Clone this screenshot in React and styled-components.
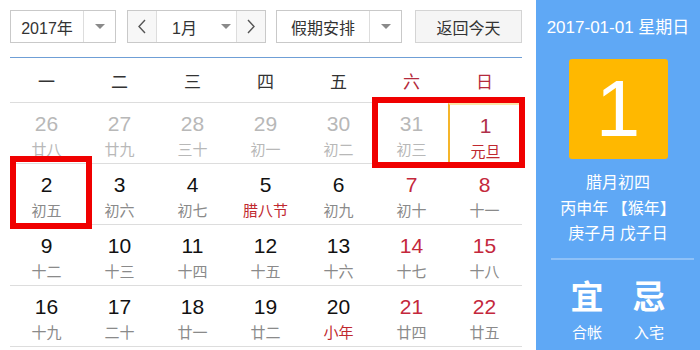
import styled, { createGlobalStyle } from "styled-components";
import React from "react";

const Global = createGlobalStyle`
  body {
    margin: 0;
    background: #fff;
    font-family: "Liberation Sans", "Noto Sans CJK SC", sans-serif;
  }
`;

const Page = styled.div`
  display: flex;
  width: 700px;
  height: 350px;
  overflow: hidden;
`;

const Main = styled.div`
  width: 512px;
  padding: 10px 14px 0 10px;
  position: relative;
`;

const Toolbar = styled.div`
  display: flex;
  align-items: center;
  height: 33px;
`;

const Select = styled.div`
  display: flex;
  height: 33px;
  box-sizing: border-box;
  border: 1px solid #c9c9c9;
  background: #fff;
  margin-right: ${(p) => p.$gap || 0}px;
`;

const SelectText = styled.div`
  width: ${(p) => p.$w}px;
  display: flex;
  align-items: center;
  justify-content: center;
  font-size: 16px;
  color: #333;
  font-family: "Liberation Sans", "Noto Sans CJK SC", sans-serif;
`;

const ArrowBox = styled.div`
  width: 32px;
  box-sizing: border-box;
  border-left: 1px solid #ddd;
  display: flex;
  align-items: center;
  justify-content: center;
`;

const Caret = styled.span`
  width: 0;
  height: 0;
  border-left: 5px solid transparent;
  border-right: 5px solid transparent;
  border-top: 5px solid #8a8a8a;
  margin-left: ${(p) => p.$ml || 0}px;
`;

const NavBtn = styled.div`
  width: 29px;
  box-sizing: border-box;
  display: flex;
  align-items: center;
  justify-content: center;
  background: #f7f7f7;
  border-${(p) => p.$side}: 1px solid #ddd;
`;

const MonthMid = styled.div`
  width: 79px;
  display: flex;
  align-items: center;
  font-size: 16px;
  color: #333;
  padding-left: 15px;
  box-sizing: border-box;
`;

const TodayBtn = styled.div`
  width: 106px;
  height: 31px;
  border: 1px solid #d4d4d4;
  background: #f5f5f5;
  display: flex;
  align-items: center;
  justify-content: center;
  font-size: 16px;
  color: #333;
`;

const Grid = styled.div`
  margin-top: 14px;
  border-top: 1px solid #6f9fd6;
  position: relative;
`;

const HeadRow = styled.div`
  display: grid;
  grid-template-columns: repeat(7, 73px);
  height: 44px;
  border-bottom: 1px solid #ddd;
`;

const HeadCell = styled.div`
  display: flex;
  align-items: center;
  justify-content: center;
  font-size: 17px;
  color: ${(p) => (p.$weekend ? "#b42a3c" : "#333")};
  font-family: "Noto Sans CJK SC", sans-serif;
`;

const Week = styled.div`
  display: grid;
  grid-template-columns: repeat(7, 73px);
  height: 60px;
  border-bottom: 1px solid #ddd;
`;

const Day = styled.div`
  display: flex;
  flex-direction: column;
  align-items: center;
  padding-top: 9px;
  box-sizing: border-box;
  border-left: ${(p) => (p.$today ? "2px solid #f5b52a" : "none")};
  border-top: ${(p) => (p.$today ? "2px solid #fbe6a8" : "none")};
`;

const Num = styled.div`
  font-size: 21px;
  line-height: 24px;
  color: ${(p) => p.$c};
  font-family: "Liberation Sans", Arial, sans-serif;
`;

const Lunar = styled.div`
  margin-top: 2px;
  font-size: 15px;
  line-height: 21px;
  color: ${(p) => p.$c};
  font-family: "Noto Sans CJK SC", sans-serif;
`;

const Mark = styled.div`
  position: absolute;
  border: 6px solid #f00000;
  box-sizing: border-box;
  pointer-events: none;
`;

const Side = styled.div`
  width: 164px;
  background: #5fa8f5;
  color: #fff;
  display: flex;
  flex-direction: column;
  align-items: center;
  font-family: "Noto Sans CJK SC", sans-serif;
`;

const SideDate = styled.div`
  margin-top: 16px;
  font-size: 17px;
  line-height: 24px;
  font-family: "Liberation Sans", "Noto Sans CJK SC", sans-serif;
`;

const BigDay = styled.div`
  margin-top: 19px;
  width: 99px;
  height: 100px;
  background: #ffb800;
  border-radius: 3px;
  display: flex;
  align-items: center;
  justify-content: center;
  font-size: 80px;
  font-family: "Liberation Sans", Arial, sans-serif;
`;

const SideLine = styled.div`
  font-size: 16px;
  line-height: 25.5px;
`;

const Info = styled.div`
  margin-top: 10px;
  display: flex;
  flex-direction: column;
  align-items: center;
`;

const Divider = styled.div`
  width: 143px;
  height: 2px;
  background: #8ec1f8;
  margin: 12px 0 0 8px;
`;

const YiJi = styled.div`
  display: flex;
  gap: 26px;
  margin-top: 14px;
  margin-left: 0px;
`;

const YiCol = styled.div`
  display: flex;
  flex-direction: column;
  align-items: center;
  width: 36px;
`;

const YiBig = styled.div`
  font-size: 33px;
  font-weight: bold;
  line-height: 42px;
`;

const YiSmall = styled.div`
  font-size: 15px;
  margin-top: 5px;
`;

const Chevron = ({ dir }) => (
  <svg width="10" height="15" viewBox="0 0 10 15">
    <path
      d={dir === "left" ? "M8 1 L2 7.5 L8 14" : "M2 1 L8 7.5 L2 14"}
      fill="none"
      stroke="#555"
      strokeWidth="1.4"
    />
  </svg>
);

const GRAY = "#b8b8b8";
const BLACK = "#111";
const RED = "#c4283c";
const LG = "#8a8a8a";
const HR = "#c0282f";

const weeks = [
  [
    ["26", "廿八", GRAY, GRAY], ["27", "廿九", GRAY, GRAY], ["28", "三十", GRAY, GRAY],
    ["29", "初一", GRAY, GRAY], ["30", "初二", GRAY, GRAY], ["31", "初三", GRAY, GRAY],
    ["1", "元旦", "#b0304a", HR, true],
  ],
  [
    ["2", "初五", BLACK, LG], ["3", "初六", BLACK, LG], ["4", "初七", BLACK, LG],
    ["5", "腊八节", BLACK, HR], ["6", "初九", BLACK, LG], ["7", "初十", RED, LG],
    ["8", "十一", RED, LG],
  ],
  [
    ["9", "十二", BLACK, LG], ["10", "十三", BLACK, LG], ["11", "十四", BLACK, LG],
    ["12", "十五", BLACK, LG], ["13", "十六", BLACK, LG], ["14", "十七", RED, LG],
    ["15", "十八", RED, LG],
  ],
  [
    ["16", "十九", BLACK, LG], ["17", "二十", BLACK, LG], ["18", "廿一", BLACK, LG],
    ["19", "廿二", BLACK, LG], ["20", "小年", BLACK, HR], ["21", "廿四", RED, LG],
    ["22", "廿五", RED, LG],
  ],
];

const heads = ["一", "二", "三", "四", "五", "六", "日"];

function App() {
  return (
    <Page>
      <Global />
      <Main>
        <Toolbar>
          <Select $gap={11}>
            <SelectText $w={72}>2017年</SelectText>
            <ArrowBox><Caret /></ArrowBox>
          </Select>
          <Select $gap={10}>
            <NavBtn $side="right"><Chevron dir="left" /></NavBtn>
            <MonthMid>
              1月
              <Caret $ml={24} />
            </MonthMid>
            <NavBtn $side="left"><Chevron dir="right" /></NavBtn>
          </Select>
          <Select $gap={13}>
            <SelectText $w={92}>假期安排</SelectText>
            <ArrowBox><Caret /></ArrowBox>
          </Select>
          <TodayBtn>返回今天</TodayBtn>
        </Toolbar>
        <Grid>
          <HeadRow>
            {heads.map((h, i) => (
              <HeadCell key={h} $weekend={i > 4}>{h}</HeadCell>
            ))}
          </HeadRow>
          {weeks.map((w, wi) => (
            <Week key={wi}>
              {w.map(([n, l, nc, lc, today]) => (
                <Day key={n} $today={today}>
                  <Num $c={nc}>{n}</Num>
                  <Lunar $c={lc}>{l}</Lunar>
                </Day>
              ))}
            </Week>
          ))}
          <Mark style={{ left: 362, top: 39, width: 153, height: 71 }} />
          <Mark style={{ left: 0, top: 98, width: 82, height: 73 }} />
        </Grid>
      </Main>
      <Side>
        <SideDate>2017-01-01 星期日</SideDate>
        <BigDay>1</BigDay>
        <Info>
          <SideLine>腊月初四</SideLine>
          <SideLine>丙申年 【猴年】</SideLine>
          <SideLine>庚子月 戊子日</SideLine>
        </Info>
        <Divider />
        <YiJi>
          <YiCol>
            <YiBig>宜</YiBig>
            <YiSmall>合帐</YiSmall>
          </YiCol>
          <YiCol>
            <YiBig>忌</YiBig>
            <YiSmall>入宅</YiSmall>
          </YiCol>
        </YiJi>
      </Side>
    </Page>
  );
}

export default App;
